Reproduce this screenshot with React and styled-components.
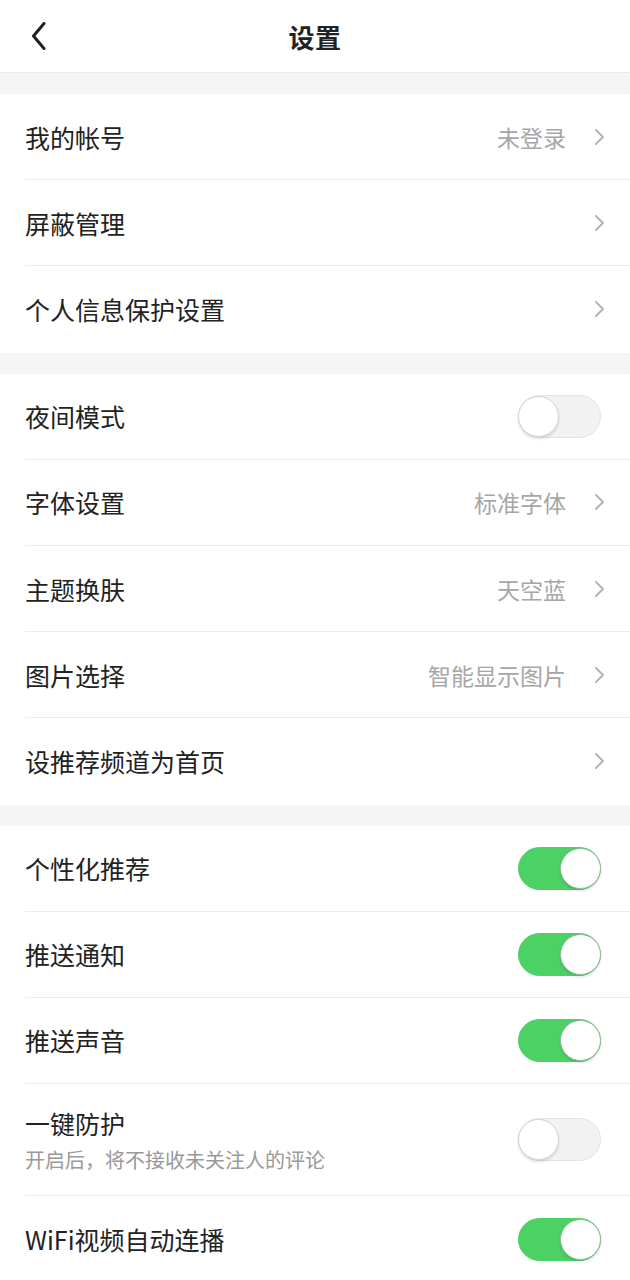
import React from 'react';
import styled, { createGlobalStyle } from 'styled-components';

const GlobalStyle = createGlobalStyle`
  html, body {
    margin: 0;
    padding: 0;
    background: #ffffff;
  }
  body {
    font-family: "Noto Sans CJK SC", "Noto Sans", sans-serif;
    color: #222222;
  }
`;

const sections = [
  [
    { label: '我的帐号', value: '未登录', arrow: true },
    { label: '屏蔽管理', arrow: true },
    { label: '个人信息保护设置', arrow: true },
  ],
  [
    { label: '夜间模式', toggle: false },
    { label: '字体设置', value: '标准字体', arrow: true },
    { label: '主题换肤', value: '天空蓝', arrow: true },
    { label: '图片选择', value: '智能显示图片', arrow: true },
    { label: '设推荐频道为首页', arrow: true },
  ],
  [
    { label: '个性化推荐', toggle: true },
    { label: '推送通知', toggle: true },
    { label: '推送声音', toggle: true },
    { label: '一键防护', sub: '开启后，将不接收未关注人的评论', toggle: false },
    { label: 'WiFi视频自动连播', toggle: true },
  ],
];

const App = () => (
  <Page>
    <GlobalStyle />
    <Header>
      <BackButton aria-label="返回">
        <svg width="16" height="28" viewBox="0 0 16 28" fill="none">
          <path d="M13 1.5 L2.5 14 L13 26.5" stroke="#222" strokeWidth="3" strokeLinecap="round" strokeLinejoin="round" />
        </svg>
      </BackButton>
      <Title>设置</Title>
    </Header>

    {sections.map((rows, i) => (
      <Section key={i}>
        {rows.map(row => (
          <Row key={row.label} $tall={!!row.sub}>
            <Labels>
              <Label>{row.label}</Label>
              {row.sub && <Sub>{row.sub}</Sub>}
            </Labels>
            {row.value && <Value>{row.value}</Value>}
            {row.arrow && (
              <Chevron width="11" height="18" viewBox="0 0 11 18" fill="none">
                <path d="M2 2 L9 9 L2 16" stroke="#b3b3b3" strokeWidth="2" strokeLinecap="round" strokeLinejoin="round" />
              </Chevron>
            )}
            {row.toggle !== undefined && (
              <Switch $on={row.toggle}>
                <Knob $on={row.toggle} />
              </Switch>
            )}
          </Row>
        ))}
      </Section>
    ))}
  </Page>
);

const Page = styled.div`
  width: 630px;
  min-height: 1280px;
  background: #f5f5f5;
`;

const Header = styled.header`
  position: relative;
  display: flex;
  align-items: center;
  justify-content: center;
  height: 72px;
  background: #ffffff;
  border-bottom: 1px solid #ebebeb;
`;

const BackButton = styled.div`
  position: absolute;
  left: 31px;
  top: 22px;
  display: flex;
`;

const Title = styled.h1`
  margin: 0;
  font-size: 26px;
  font-weight: 700;
  color: #222222;
  letter-spacing: 0.5px;
`;

const Section = styled.section`
  margin-top: 21px;
  background: #ffffff;
  padding-left: 25px;
`;

const Row = styled.div`
  display: flex;
  align-items: center;
  box-sizing: border-box;
  height: ${p => (p.$tall ? '112px' : '86.2px')};
  padding-right: 25px;
  border-bottom: 1px solid #ededed;

  &:last-child {
    border-bottom: none;
  }
`;

const Labels = styled.div`
  flex: 1;
  display: flex;
  flex-direction: column;
  gap: 8px;
`;

const Label = styled.span`
  font-size: 25px;
  line-height: 32px;
  color: #222222;
`;

const Sub = styled.span`
  font-size: 20px;
  line-height: 26px;
  color: #999999;
`;

const Value = styled.span`
  font-size: 23px;
  color: #a6a6a6;
  margin-right: 28px;
`;

const Chevron = styled.svg`
  display: block;
`;

const Switch = styled.div`
  position: relative;
  box-sizing: border-box;
  width: 83px;
  height: 43px;
  border-radius: 22px;
  margin-right: 4px;
  background: ${p => (p.$on ? '#4cd264' : '#f2f2f2')};
  border: 1px solid ${p => (p.$on ? '#4cd264' : '#e3e3e3')};
`;

const Knob = styled.div`
  position: absolute;
  top: 0;
  ${p => (p.$on ? 'right: -1px;' : 'left: -1px;')}
  box-sizing: border-box;
  width: 41px;
  height: 41px;
  border-radius: 50%;
  background: #ffffff;
  border: 1px solid ${p => (p.$on ? '#8fb996' : '#d4d4d4')};
  box-shadow: 0 2px 3px rgba(0, 0, 0, 0.12);
`;

export default App;
